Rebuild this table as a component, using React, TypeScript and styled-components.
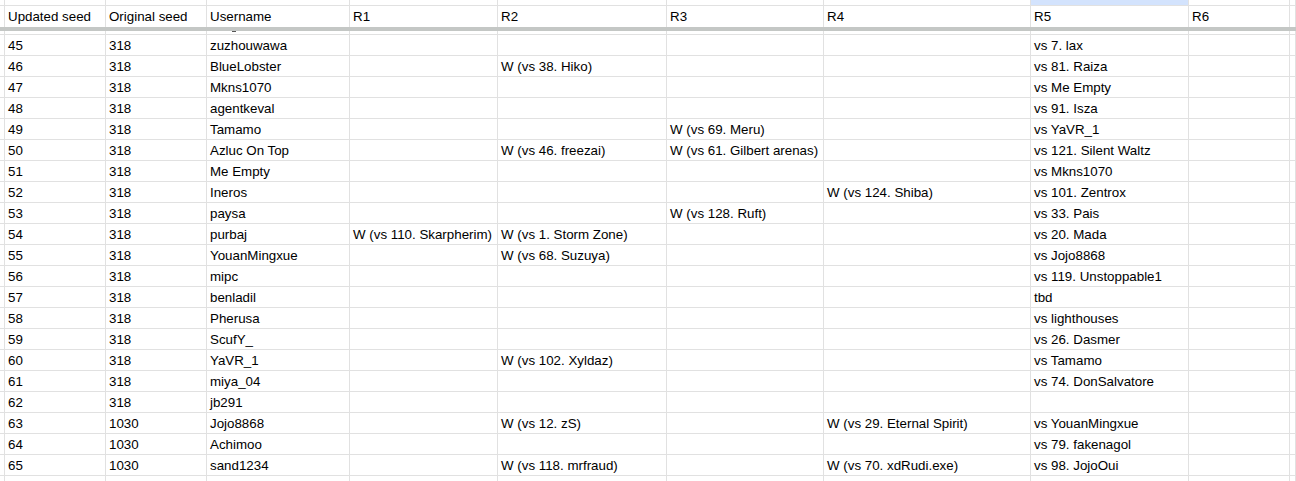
import React from 'react';
import styled, { createGlobalStyle } from 'styled-components';

const GlobalStyle = createGlobalStyle`
  html, body {
    margin: 0;
    padding: 0;
    background: #ffffff;
    overflow: hidden;
  }
  body {
    font-family: "Liberation Sans", Arial, sans-serif;
  }
`;

// widths include the 1px right gridline
const COLUMNS = '5px 101px 101px 143px 148px 169px 157px 207px 158px 101px 1fr';
const GRID = '#e1e1e1';

const Sheet = styled.div`
  width: 1296px;
  height: 481px;
  overflow: hidden;
  background: #fff;
  color: #000;
  font-size: 13.33px;
`;

const Row = styled.div<{ $height: number; $noLine?: boolean }>`
  display: grid;
  grid-template-columns: ${COLUMNS};
  height: ${(p) => p.$height}px;
  border-bottom: ${(p) => (p.$noLine ? 'none' : `1px solid ${GRID}`)};
  box-sizing: border-box;
`;

const Cell = styled.div<{ $selected?: boolean }>`
  border-right: 1px solid ${GRID};
  box-sizing: border-box;
  padding: 1px 0 0 3px;
  white-space: nowrap;
  overflow: visible;
  line-height: 20px;
  background: ${(p) => (p.$selected ? '#d3e3fd' : 'transparent')};
  position: relative;
`;

const FreezeBar = styled.div`
  height: 4px;
  background: #c4c7c5;
`;

const ClippedMark = styled.span`
  position: absolute;
  left: 25px;
  top: 0;
  width: 4px;
  height: 1px;
  background: #555;
`;

const headers = ['Updated seed', 'Original seed', 'Username', 'R1', 'R2', 'R3', 'R4', 'R5', 'R6'];

type Entry = [string, string, string, string, string, string, string, string];

const rows: Entry[] = [
  ['45', '318', 'zuzhouwawa', '', '', '', '', 'vs 7. lax'],
  ['46', '318', 'BlueLobster', '', 'W (vs 38. Hiko)', '', '', 'vs 81. Raiza'],
  ['47', '318', 'Mkns1070', '', '', '', '', 'vs Me Empty'],
  ['48', '318', 'agentkeval', '', '', '', '', 'vs 91. Isza'],
  ['49', '318', 'Tamamo', '', '', 'W (vs 69. Meru)', '', 'vs YaVR_1'],
  ['50', '318', 'Azluc On Top', '', 'W (vs 46. freezai)', 'W (vs 61. Gilbert arenas)', '', 'vs 121. Silent Waltz'],
  ['51', '318', 'Me Empty', '', '', '', '', 'vs Mkns1070'],
  ['52', '318', 'Ineros', '', '', '', 'W (vs 124. Shiba)', 'vs 101. Zentrox'],
  ['53', '318', 'paysa', '', '', 'W (vs 128. Ruft)', '', 'vs 33. Pais'],
  ['54', '318', 'purbaj', 'W (vs 110. Skarpherim)', 'W (vs 1. Storm Zone)', '', '', 'vs 20. Mada'],
  ['55', '318', 'YouanMingxue', '', 'W (vs 68. Suzuya)', '', '', 'vs Jojo8868'],
  ['56', '318', 'mipc', '', '', '', '', 'vs 119. Unstoppable1'],
  ['57', '318', 'benladil', '', '', '', '', 'tbd'],
  ['58', '318', 'Pherusa', '', '', '', '', 'vs lighthouses'],
  ['59', '318', 'ScufY_', '', '', '', '', 'vs 26. Dasmer'],
  ['60', '318', 'YaVR_1', '', 'W (vs 102. Xyldaz)', '', '', 'vs Tamamo'],
  ['61', '318', 'miya_04', '', '', '', '', 'vs 74. DonSalvatore'],
  ['62', '318', 'jb291', '', '', '', '', ''],
  ['63', '1030', 'Jojo8868', '', 'W (vs 12. zS)', '', 'W (vs 29. Eternal Spirit)', 'vs YouanMingxue'],
  ['64', '1030', 'Achimoo', '', '', '', '', 'vs 79. fakenagol'],
  ['65', '1030', 'sand1234', '', 'W (vs 118. mrfraud)', '', 'W (vs 70. xdRudi.exe)', 'vs 98. JojoOui'],
];

const EmptyCells: React.FC<{ selectedIndex?: number; markIndex?: number }> = ({ selectedIndex, markIndex }) => (
  <>
    {Array.from({ length: 11 }).map((_, i) => (
      <Cell key={i} $selected={i === selectedIndex}>
        {i === markIndex && <ClippedMark />}
      </Cell>
    ))}
  </>
);

const App: React.FC = () => {
  return (
    <>
      <GlobalStyle />
      <Sheet>
        <Row $height={6}>
          <EmptyCells selectedIndex={8} />
        </Row>

        <Row $height={21} $noLine>
          <Cell />
          {headers.map((h) => (
            <Cell key={h}>{h}</Cell>
          ))}
          <Cell />
        </Row>

        <FreezeBar />

        <Row $height={4}>
          <EmptyCells markIndex={3} />
        </Row>

        {rows.map((r) => (
          <Row key={r[0]} $height={21}>
            <Cell />
            {r.map((v, i) => (
              <Cell key={i}>{v}</Cell>
            ))}
            <Cell />
            <Cell />
          </Row>
        ))}

        <Row $height={10}>
          <EmptyCells />
        </Row>
      </Sheet>
    </>
  );
};

export default App;
